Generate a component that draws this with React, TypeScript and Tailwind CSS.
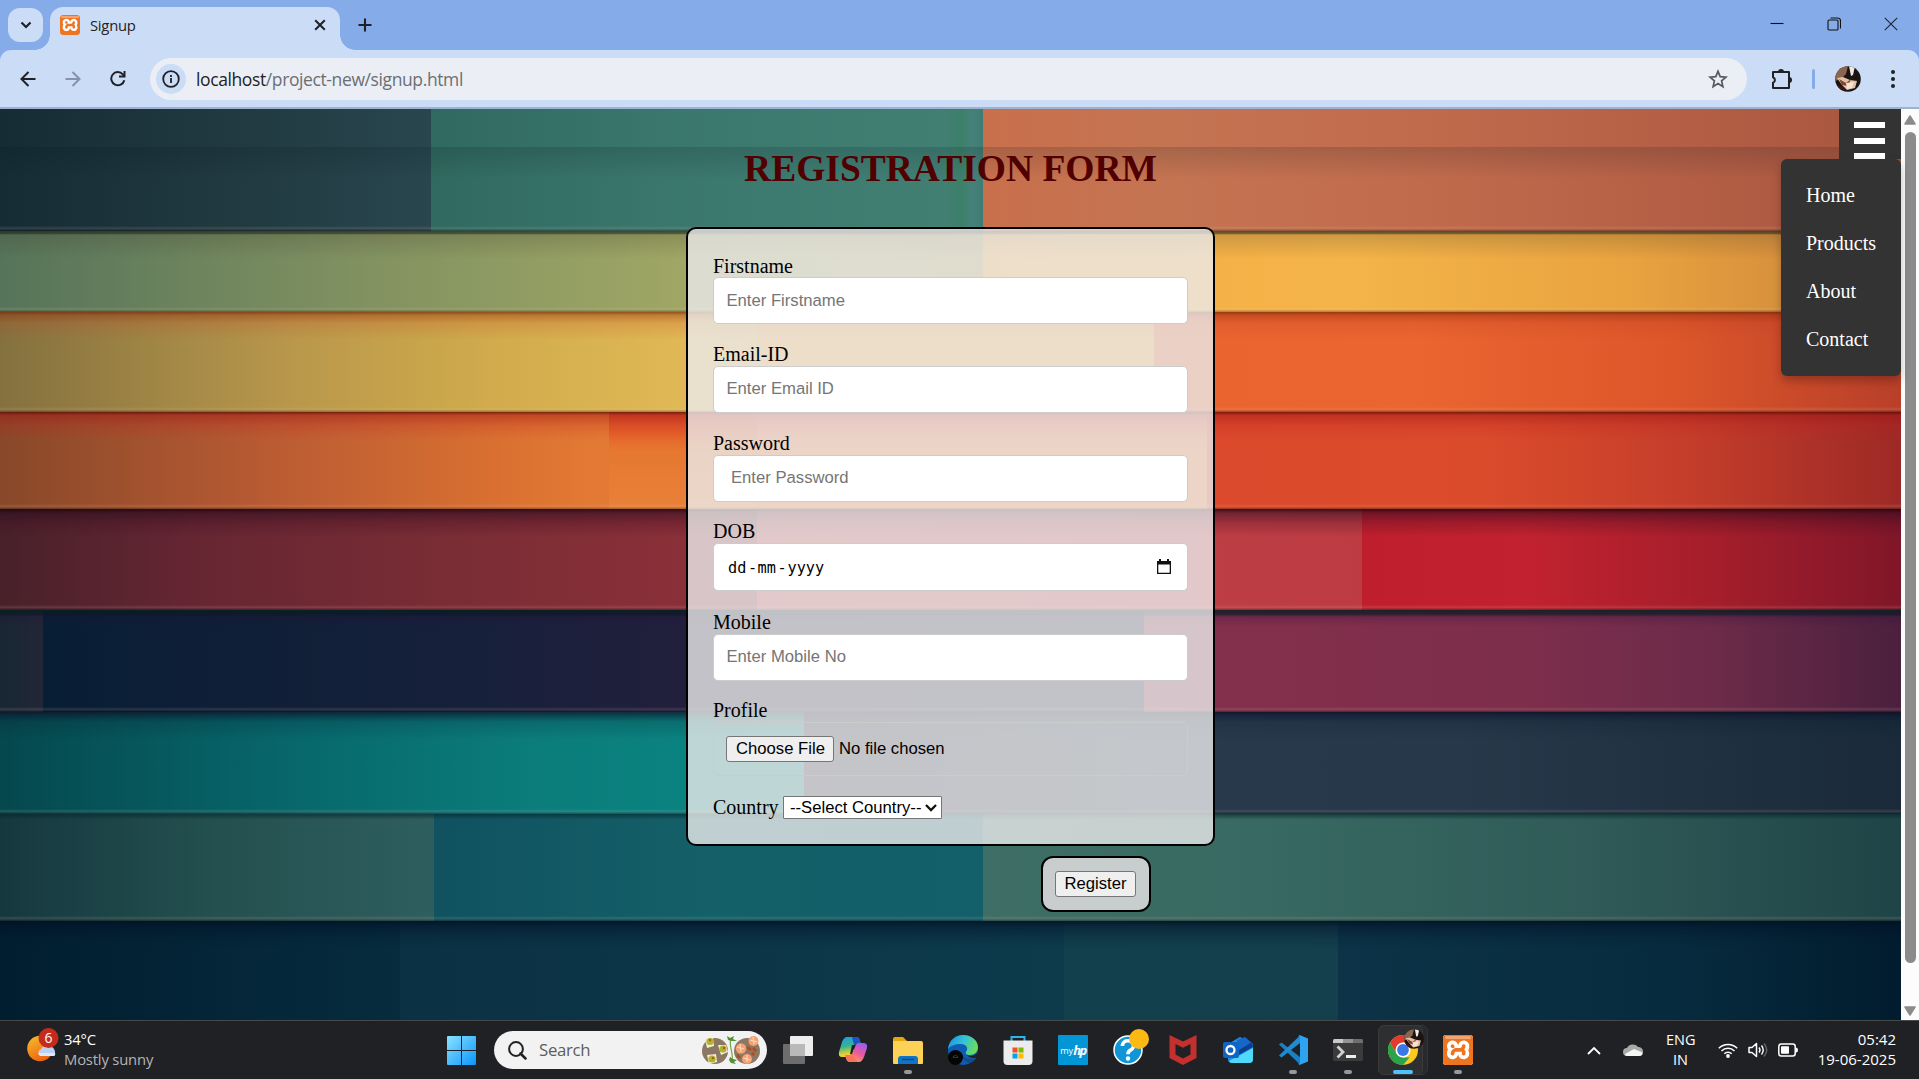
import type { ReactNode } from "react";
import { SiXampp } from "react-icons/si";

type Segment = { size: string; fill: string };
type Row = { height: string; shade: string; segments: Segment[] };

const ROWS: Row[] = [
  {
    height: "h-[122px]",
    shade: "",
    segments: [
      { size: "w-[431px]", fill: "bg-[linear-gradient(90deg,#152c35,#20383f_50%,#29464e)]" },
      { size: "w-[552px]", fill: "bg-[linear-gradient(90deg,#30695f,#3a766c_40%,#417f73_93%,#3c8068_96%,#46807a_98%,#3f7c74)]" },
      { size: "flex-1", fill: "bg-[linear-gradient(90deg,#c96f4c,#c47452_20%,#c06a4c_50%,#a8553f)]" },
    ],
  },
  {
    height: "h-[81px]",
    shade: "bg-[linear-gradient(180deg,rgba(20,30,20,0.7),rgba(20,30,20,0.55)_9%,rgba(60,50,40,0.2)_14%,transparent)]",
    segments: [
      { size: "w-[983px]", fill: "bg-[linear-gradient(90deg,#56745a,#7f9060_35%,#a0a765_70%,#b0a25c)]" },
      { size: "flex-1", fill: "bg-[linear-gradient(90deg,#f5ac44,#f4b449_40%,#e9a33f_70%,#cb833a)]" },
    ],
  },
  {
    height: "h-[100px]",
    shade: "bg-[linear-gradient(180deg,rgba(110,40,0,0.7),rgba(150,40,10,0.4)_12%,rgba(190,60,30,0.18)_40%,transparent)]",
    segments: [
      { size: "w-[757px]", fill: "bg-[linear-gradient(90deg,#84713f,#b8974b_38%,#d1ab4c_65%,#e0b855_90%,#e4b654)]" },
      { size: "w-[397px]", fill: "bg-[#f3a848]" },
      { size: "flex-1", fill: "bg-[linear-gradient(90deg,#ea6430,#ea6530_35%,#dc562a_70%,#b93f29)]" },
    ],
  },
  {
    height: "h-[97px]",
    shade: "bg-[linear-gradient(180deg,rgba(90,10,0,0.75),rgba(160,20,20,0.45)_12%,rgba(190,30,30,0.2)_50%,transparent)]",
    segments: [
      { size: "w-[609px]", fill: "bg-[linear-gradient(90deg,#884829,#ba5b33_45%,#dc7231_85%,#e37a34)]" },
      { size: "w-[148px]", fill: "bg-[linear-gradient(180deg,#dc4f2a,#e56129_22%,#e67830_40%,#e98138)]" },
      { size: "w-[450px]", fill: "bg-[linear-gradient(180deg,#ea5a38,#ef7a38_40%,#f07c34)]" },
      { size: "flex-1", fill: "bg-[linear-gradient(90deg,#dc492c,#da4b2b_40%,#c43d2a_70%,#9d2926)]" },
    ],
  },
  {
    height: "h-[101px]",
    shade: "bg-[linear-gradient(180deg,rgba(25,5,10,0.8),rgba(40,10,30,0.5)_15%,rgba(60,10,30,0.25)_50%,transparent)]",
    segments: [
      { size: "w-[757px]", fill: "bg-[linear-gradient(90deg,#48212a,#652632_25%,#7a2d35_60%,#8f303a)]" },
      { size: "w-[605px]", fill: "bg-[linear-gradient(90deg,#c0434a,#bd3c43)]" },
      { size: "flex-1", fill: "bg-[linear-gradient(90deg,#bf1f2d,#c2222f_30%,#a51e2b_65%,#801629)]" },
    ],
  },
  {
    height: "h-[102px]",
    shade: "bg-[linear-gradient(180deg,rgba(10,30,35,0.85),rgba(10,25,35,0.7)_15%,rgba(40,10,60,0.2)_25%,transparent_60%)]",
    segments: [
      { size: "w-[43px]", fill: "bg-[linear-gradient(90deg,#182732,#222638)]" },
      { size: "w-[1101px]", fill: "bg-[linear-gradient(90deg,#081e34,#17203a_40%,#231f3d_60%,#1f2740)]" },
      { size: "flex-1", fill: "bg-[linear-gradient(90deg,#84304b,#7d2e4b_50%,#6c2b49_75%,#4b203e)]" },
    ],
  },
  {
    height: "h-[102px]",
    shade: "bg-[linear-gradient(180deg,rgba(15,10,30,0.7),rgba(10,20,45,0.5)_15%,rgba(5,30,45,0.2)_35%,transparent)]",
    segments: [
      { size: "w-[804px]", fill: "bg-[linear-gradient(90deg,#05484e,#07666a_35%,#0b7c7a_65%,#0a8784)]" },
      { size: "flex-1", fill: "bg-[linear-gradient(90deg,#2c2c42,#28394a_30%,#27384a_60%,#1a2a3a)]" },
    ],
  },
  {
    height: "h-[107px]",
    shade: "bg-[linear-gradient(180deg,rgba(5,40,45,0.65),rgba(5,40,45,0.35)_10%,transparent_20%)]",
    segments: [
      { size: "w-[434px]", fill: "bg-[linear-gradient(90deg,#15383f,#24504f_50%,#2f5e5f)]" },
      { size: "w-[549px]", fill: "bg-[linear-gradient(90deg,#105260,#146068_50%,#135f6a)]" },
      { size: "flex-1", fill: "bg-[linear-gradient(90deg,#3e6e65,#386962_30%,#305b58_65%,#1f4447)]" },
    ],
  },
  {
    height: "h-[99px]",
    shade: "bg-[linear-gradient(180deg,rgba(2,18,35,0.85),rgba(2,18,40,0.5)_20%,rgba(2,25,45,0.2)_60%,transparent)]",
    segments: [
      { size: "w-[400px]", fill: "bg-[linear-gradient(90deg,#011e30,#062c3e)]" },
      { size: "w-[664px]", fill: "bg-[linear-gradient(90deg,#0b3144,#0d3b4c)]" },
      { size: "w-[274px]", fill: "bg-[linear-gradient(90deg,#12404c,#143f4d)]" },
      { size: "flex-1", fill: "bg-[linear-gradient(90deg,#0c3347,#072b3e_60%,#011c2e)]" },
    ],
  },
];

function StripedBackdrop() {
  return (
    <div className="absolute inset-0 flex flex-col overflow-hidden">
      {ROWS.map((row, i) => (
        <div key={i} className={`relative flex shrink-0 ${row.height}`}>
          {row.segments.map((s, j) => (
            <div key={j} className={`${s.size} ${s.fill}`} />
          ))}
          {i > 0 && <div className={`absolute inset-x-0 top-0 h-7 ${row.shade}`} />}
          {i < ROWS.length - 1 && (
            <div className="absolute inset-x-0 bottom-0 h-[5px] bg-[linear-gradient(180deg,transparent,rgba(255,215,190,0.13)_45%,rgba(20,10,15,0.25)_90%)]" />
          )}
          {i === 0 && (
            <div className="absolute inset-x-0 top-[38px] h-8 bg-[linear-gradient(180deg,rgba(0,20,30,0.16),transparent)]" />
          )}
        </div>
      ))}
    </div>
  );
}

function XamppLogo({ size }: { size: string }) {
  return (
    <span className={`relative flex items-center justify-center overflow-hidden rounded-[3px] bg-white ${size}`}>
      <SiXampp className="size-full scale-[1.02] text-[#ee7420]" />
      <span className="absolute inset-x-[6%] top-[3%] h-[10%] rounded-sm bg-[#f3a571]" />
    </span>
  );
}

function Avatar({ className }: { className: string }) {
  return (
    <svg viewBox="0 0 26 26" className={className}>
      <clipPath id="face">
        <circle cx="13" cy="13" r="12.8" />
      </clipPath>
      <g clipPath="url(#face)">
        <rect width="26" height="26" fill="#1a1312" />
        <path d="M0 0h13l-2 8-5 5-6 2z" fill="#8a6650" />
        <path d="M14 0h6l-2 9-2 1z" fill="#efe9e2" />
        <path d="M2 12l6-1 7 3 7 1-2 7-8 2-5-5z" fill="#e3bfa4" />
        <path d="M4 13l7 4 5-4-3 7-6-1z" fill="#7b4534" />
        <path d="M11 17l8-1-2 6-5 1z" fill="#f4e3d6" />
        <path d="M2 19l7 2 2 5H3z" fill="#3b1614" />
      </g>
    </svg>
  );
}

function Browser() {
  return (
    <header className="flex h-[109px] shrink-0 flex-col bg-[#85ace9] font-['Open_Sans',sans-serif]">
      <div className="flex h-[50px] shrink-0">
        <button className="mt-2 ml-2 flex h-[34px] w-[35px] items-center justify-center rounded-xl bg-[#cbdcf6]">
          <svg viewBox="0 0 12 8" className="h-2 w-3">
            <path d="M1.5 1.5L6 6l4.5-4.5" fill="none" stroke="#1f2124" strokeWidth="2.2" />
          </svg>
        </button>
        <div className="relative mt-[7px] ml-[7px] flex h-[43px] w-[290px] items-center rounded-t-[13px] bg-[#cbdcf6] pb-[7px] pl-[10px]">
          <span className="absolute bottom-0 -left-[15px] size-[15px] bg-[radial-gradient(circle_at_0_0,transparent_14.5px,#cbdcf6_15px)]" />
          <span className="absolute -right-[15px] bottom-0 size-[15px] bg-[radial-gradient(circle_at_100%_0,transparent_14.5px,#cbdcf6_15px)]" />
          <XamppLogo size="size-5" />
          <span className="mt-px ml-[10px] text-[14.8px] tracking-[-0.25px] text-[#1f2124]">Signup</span>
          <svg viewBox="0 0 12 12" className="mr-[14px] ml-auto size-3">
            <path d="M1.2 1.2l9.6 9.6M10.800 1.2L1.200 10.800" stroke="#1f2124" strokeWidth="2" />
          </svg>
        </div>
        <svg viewBox="0 0 14 14" className="mt-[18px] ml-[18px] size-[14px]">
          <path d="M7 .5v13M.5 7h13" stroke="#1f2124" strokeWidth="2.1" />
        </svg>
        <div className="mr-[21px] ml-auto flex items-start gap-[42.500px] pt-[17px]">
          <svg viewBox="0 0 14 14" className="size-[14px]">
            <path d="M0.500 6.500h13" stroke="#111" strokeWidth="1.1" />
          </svg>
          <svg viewBox="0 0 14 14" className="size-[14px]">
            <path d="M1 4a1 1 0 0 1 1-1h8a1 1 0 0 1 1 1v8a1 1 0 0 1-1 1H2a1 1 0 0 1-1-1zM3.500 1h7a3 3 0 0 1 3 3v7.500" fill="none" stroke="#111" strokeWidth="1.100" />
          </svg>
          <svg viewBox="0 0 14 14" className="ml-px size-[14px]">
            <path d="M.8.8l12.400 12.400M13.200.8L.8 13.200" stroke="#1b2430" strokeWidth="1.100" />
          </svg>
        </div>
      </div>
      <div className="flex h-[59px] items-center rounded-t-[11px] border-b-2 border-[#9fb1d0] bg-[#cbdcf6]">
        <svg viewBox="0 0 16 16" className="ml-[19.5px] size-4">
          <path d="M15.500 8H2M8.500 1L1.500 8l7 7" fill="none" stroke="#1f2124" strokeWidth="2" />
        </svg>
        <svg viewBox="0 0 16 16" className="ml-[29px] size-4">
          <path d="M.5 8H14M7.500 1l7 7-7 7" fill="none" stroke="#8592a9" strokeWidth="2" />
        </svg>
        <svg viewBox="0 0 16 16" className="ml-[29px] size-4">
          <path d="M14.300 9.200A6.600 6.600 0 1 1 12.800 3.300L14 4.700" fill="none" stroke="#1f2124" strokeWidth="2" />
          <path d="M15.500 0v6.500H9v-2h4.500V0z" fill="#1f2124" />
        </svg>
        <div className="ml-[24.5px] flex h-[42px] w-[1597px] items-center rounded-full bg-[#ebeff5] pr-[19.5px] pl-[6px]">
          <span className="flex size-[30px] items-center justify-center rounded-full bg-[#cbdcf6]">
            <svg viewBox="0 0 18 18" className="size-[18px]">
              <circle cx="9" cy="9" r="7.800" fill="none" stroke="#1f2124" strokeWidth="1.800" />
              <path d="M9 8v5M9 5v2" stroke="#1f2124" strokeWidth="1.800" />
            </svg>
          </span>
          <span className="mt-[2px] ml-[10px] text-[17.5px] tracking-[-0.39px] text-[#6a6e73]">
            <span className="text-[#1f2124]">localhost</span>/project-new/signup.html
          </span>
          <svg viewBox="0 0 20 20" className="ml-auto size-5">
            <path d="M10 2.300l2.200 5.300 5.800.5-4.400 3.800 1.300 5.700L10 14.600l-4.900 3 1.300-5.700L2 8.100l5.800-.5z" fill="none" stroke="#55585e" strokeWidth="1.700" />
          </svg>
        </div>
        <svg viewBox="0 0 22 22" className="ml-6 size-[22px]">
          <path d="M2 4h16v16H2v-5.200a3 3 0 0 0 0-5.600z" fill="none" stroke="#1f2124" strokeWidth="2" strokeLinejoin="round" />
          <path d="M7 4a3 3 0 0 1 6 0zM18 9a3 3 0 0 1 0 6z" fill="#1f2124" />
        </svg>
        <span className="ml-[19px] h-5 w-[3px] rounded bg-[#85ace9]" />
        <Avatar className="ml-[19.5px] size-[26px]" />
        <svg viewBox="0 0 4 18" className="ml-[30px] h-[18px] w-1">
          <circle cx="2" cy="2" r="2" fill="#1f2124" />
          <circle cx="2" cy="9" r="2" fill="#1f2124" />
          <circle cx="2" cy="16" r="2" fill="#1f2124" />
        </svg>
      </div>
    </header>
  );
}

const FIELD =
  "block h-[46.5px] w-full rounded-[5px] border border-[#ccc] bg-white font-['Liberation_Sans',Arial,sans-serif] text-[16.667px] placeholder:text-[#757575] placeholder:opacity-100";

function Field({ label, height, children }: { label: string; height: string; children: ReactNode }) {
  return (
    <div className={`${height} first:[&_input]:pt-px first:[&>label]:leading-[24px]`}>
      <label className="block h-[23px] leading-[23px]">{label}</label>
      {children}
    </div>
  );
}

function DateField() {
  return (
    <div className="flex h-[48px] w-full items-center rounded-[5px] border border-[#ccc] bg-white pr-4 pl-[14px] font-['DejaVu_Sans_Mono',monospace] text-[15.200px] leading-none">
      <div className="flex pt-[3px]">
        <span className="w-[20px]">dd</span>
        <span className="w-[9.5px]">-</span>
        <span className="w-[20px]">mm</span>
        <span className="w-[10px]">-</span>
        <span>yyyy</span>
      </div>
      <svg viewBox="0 0 14 16" className="ml-auto h-4 w-[14px]">
        <path d="M0 2h2V0h2v2h6V0h2v2h2v13H0zM1.300 5.500v8.200h11.400V5.500z" fill="#111" fillRule="evenodd" />
      </svg>
    </div>
  );
}

function SignupForm() {
  return (
    <form className="h-[619px] w-[529px] rounded-[10px] border-2 border-black bg-[rgba(235,235,235,0.8)] p-[25px] text-xl">
      <Field label="Firstname" height="h-[89px]">
        <input className={`${FIELD} px-[12.5px]`} placeholder="Enter Firstname" />
      </Field>
      <Field label="Email-ID" height="h-[89px]">
        <input className={`${FIELD} px-[12.5px]`} placeholder="Enter Email ID" />
      </Field>
      <Field label="Password" height="h-[88px]">
        <input className={`${FIELD} px-[17px]`} placeholder="Enter Password" />
      </Field>
      <Field label="DOB" height="h-[91px]">
        <DateField />
      </Field>
      <Field label="Mobile" height="h-[88px]">
        <input className={`${FIELD} px-[12.5px]`} placeholder="Enter Mobile No" />
      </Field>
      <Field label="Profile" height="h-[96px]">
        <div className="flex h-[54px] items-center gap-[5px] rounded-[5px] border border-[#ccc] pl-[12px] font-['Liberation_Sans',Arial,sans-serif] text-[16.667px]">
          <button type="button" className="h-[26px] w-[108px] rounded-[3px] border border-[#767676] bg-[#efefef] pl-px leading-none">
            Choose File
          </button>
          <span>No file chosen</span>
        </div>
      </Field>
      <div className="flex h-[25px] items-center">
        <label className="w-[70px] leading-[23px]">Country</label>
        <div className="flex h-[23px] w-[159px] items-center justify-between rounded-[1px] border border-[#767676] bg-white pr-[4px] pl-[6px] font-['Liberation_Sans',Arial,sans-serif] text-[16.667px] leading-none">
          <span className="pt-px whitespace-nowrap">--Select Country--</span>
          <svg viewBox="0 0 12 8" className="h-2 w-3">
            <path d="M1 1l5 5 5-5" fill="none" stroke="#111" strokeWidth="2.300" />
          </svg>
        </div>
      </div>
    </form>
  );
}

function Page() {
  return (
    <div className="flex h-[911px] shrink-0">
      <main className="relative flex w-[1901px] flex-col items-center font-['Liberation_Serif','Times_New_Roman',serif]">
        <StripedBackdrop />
        <h1 className="relative mt-[36px] h-[46px] text-[37.5px] leading-[47px] font-bold text-[#500000]">REGISTRATION FORM</h1>
        <div className="relative mt-[36px]">
          <SignupForm />
        </div>
        <div className="relative mt-[10px] ml-[290px] flex h-14 w-[110px] items-center justify-center rounded-[12px] border-2 border-black bg-[rgba(216,216,216,0.9)]">
          <button className="h-[26px] w-[81px] rounded-[3px] border border-[#767676] bg-[#efefef] font-['Liberation_Sans',Arial,sans-serif] text-[16.667px] leading-none">
            Register
          </button>
        </div>
        <nav className="absolute top-0 right-0 flex flex-col items-end">
          <div className="flex h-[50px] w-[62px] flex-col gap-[9.5px] bg-[#333] pt-[13px] pl-[15px]">
            <span className="h-[6px] w-[31px] shrink-0 bg-white" />
            <span className="h-[6px] w-[31px] shrink-0 bg-white" />
            <span className="h-[6px] w-[31px] shrink-0 bg-white" />
          </div>
          <ul className="h-[217px] w-[120px] rounded-[6px] bg-[#333] pt-[12px] pl-[25px] text-xl text-white shadow-[0_5px_10px_rgba(0,0,0,0.25)]">
            {["Home", "Products", "About", "Contact"].map((item) => (
              <li key={item} className="flex h-12 items-center">
                {item}
              </li>
            ))}
          </ul>
        </nav>
      </main>
      <div className="flex w-[18px] flex-col items-center bg-[#fcfcfc] pt-[6px] pb-[4px]">
        <svg viewBox="0 0 12 10" className="h-[10px] w-3">
          <path d="M6 1l5 8H1z" fill="#8b8b8b" stroke="#8b8b8b" strokeLinejoin="round" strokeWidth="1.500" />
        </svg>
        <span className="mt-[7px] h-[831px] w-[11px] rounded-full bg-[#8b8b8b]" />
        <svg viewBox="0 0 12 10" className="mt-auto h-[10px] w-3">
          <path d="M6 9l5-8H1z" fill="#8b8b8b" stroke="#8b8b8b" strokeLinejoin="round" strokeWidth="1.500" />
        </svg>
      </div>
    </div>
  );
}

function WeatherIcon() {
  return (
    <svg viewBox="0 0 34 42" className="mb-[2px] h-[42px] w-[34px]">
      <defs>
        <linearGradient id="sun" x1="0" y1="0" x2="0.500" y2="1">
          <stop offset="0" stopColor="#f5c130" />
          <stop offset="1" stopColor="#ee6410" />
        </linearGradient>
      </defs>
      <circle cx="13" cy="20.500" r="12.800" fill="url(#sun)" />
      <path d="M13 28a4 4 0 0 1 1-7 6 6 0 0 1 9-2 5 5 0 0 1 3 9z" fill="#bcd0f4" />
      <path d="M11 25h17a2 2 0 0 1-2 3H13z" fill="#dbe7fb" />
      <circle cx="21.500" cy="10" r="10" fill="#c42b1c" />
      <text x="21.500" y="15" textAnchor="middle" fontSize="14" fill="#fff" fontFamily="Open Sans, sans-serif">6</text>
    </svg>
  );
}

function StartIcon() {
  return (
    <svg viewBox="0 0 29 29" className="size-[29px]">
      <defs>
        <linearGradient id="win" x1="0" y1="0" x2="1" y2="1" gradientUnits="objectBoundingBox">
          <stop offset="0" stopColor="#8be3ff" />
          <stop offset="1" stopColor="#0a94fb" />
        </linearGradient>
      </defs>
      <path d="M1 0h13v14H0V1a1 1 0 0 1 1-1zM15 0h13a1 1 0 0 1 1 1v13H15zM0 15h14v14H1a1 1 0 0 1-1-1zM15 15h14v13a1 1 0 0 1-1 1H15z" fill="url(#win)" />
    </svg>
  );
}

function FoodArt() {
  return (
    <svg viewBox="0 0 58 32" className="h-8 w-[58px]">
      <circle cx="13" cy="17" r="13" fill="#8b7762" />
      <circle cx="45" cy="17" r="13" fill="#8b7762" />
      <g fill="#f4ecd4">
        <path d="M3 5l8-1 1 8-7 2z" />
        <path d="M16 11l8 0 2 7-7 3z" />
        <path d="M5 21l9-1 1 8-8 2z" />
      </g>
      <g fill="#a9b82b">
        <circle cx="8" cy="7.500" r="3.600" />
        <circle cx="21" cy="15" r="3.600" />
        <circle cx="10" cy="25" r="3.600" />
      </g>
      <g fill="#d9402a">
        <circle cx="8" cy="6" r="1.200" />
        <circle cx="22" cy="14" r="1.200" />
        <circle cx="11" cy="24" r="1.200" />
      </g>
      <path d="M29 4c-3 8 3 14 1 24" fill="none" stroke="#79a544" strokeWidth="1.200" />
      <path d="M25 2l3 2 4-2-1 3 4 2-5 0-4-1zM28 23l3 2 4 1-3 2 2 2-5-1-2-3z" fill="#4f9136" />
      <g fill="#f5a273">
        <circle cx="39" cy="14.500" r="5.200" />
        <circle cx="51.500" cy="7" r="5" />
        <circle cx="45" cy="25" r="5" />
      </g>
      <g fill="none" stroke="#fcd8ba" strokeWidth="1.100">
        <path d="M35 13l7 2M38 10l1 8M48 6l7 2M51 3l1 7M41.500 24l7 2M45 21l0 7" />
      </g>
      <path d="M45 13l4 3M51 14l3 3M35 21l3 3M50 19l2 2" stroke="#b8461f" strokeWidth="2.600" />
    </svg>
  );
}

const ICON = "size-[30px] overflow-visible";

const TaskView = () => (
  <svg viewBox="0 0 30 30" className={ICON}>
    <rect x="7" y="1" width="23" height="20" rx="1" fill="#ededed" />
    <rect x="0" y="9" width="22" height="20" rx="1" fill="#6d6d6d" />
    <path d="M7 9h15v12H7z" fill="#b9b9b9" />
  </svg>
);

const Copilot = () => (
  <svg viewBox="0 0 30 30" className={ICON}>
    <defs>
      <linearGradient id="cpA" x1="0" y1="0" x2="0.200" y2="1">
        <stop offset="0" stopColor="#1f9af0" />
        <stop offset="0.500" stopColor="#36b58e" />
        <stop offset="0.900" stopColor="#f0d030" />
      </linearGradient>
      <linearGradient id="cpB" x1="0.800" y1="0" x2="0.200" y2="1">
        <stop offset="0" stopColor="#9a5cf0" />
        <stop offset="0.500" stopColor="#ee5a9a" />
        <stop offset="1" stopColor="#fbb257" />
      </linearGradient>
    </defs>
    <path d="M9 2h10q2 0 3 4l1 3h-5q-2 0-3 3l-2 7q-1 3-4 3H4q-4 0-3-5l3-10q2-5 5-5z" fill="url(#cpA)" />
    <path d="M14 2h5q2 0 3 4l1 3h-5q-1 0-2 1z" fill="#1b54c8" />
    <path d="M21 27H12q-3 0-4-4l-1-3h5q2 0 3-3l2-5q1-4 4-4h4q5 0 4 5l-3 9q-2 5-5 5z" fill="url(#cpB)" />
    <path d="M7 20h6l3-7v7q0 3 4 7h-8q-3 0-4-4z" fill="#f9735b" />
    <path d="M14 10h3l-3 9h-2z" fill="#202124" />
  </svg>
);

const Folder = () => (
  <svg viewBox="0 0 30 30" className={ICON}>
    <path d="M0 4q0-2 2-2h8l4 4v8H0z" fill="#e5a50f" />
    <path d="M0 6h28q2 0 2 2v20q0 1-1 1H1q-1 0-1-1z" fill="#fdd155" />
    <path d="M5 24q0-3 3-3h14q3 0 3 3v5H5z" fill="#1173c6" />
    <path d="M9 24.500h12" stroke="#0a4c91" strokeWidth="1.500" />
  </svg>
);

const Edge = () => (
  <svg viewBox="0 0 30 30" className={ICON}>
    <defs>
      <linearGradient id="edT" x1="0" y1="0.300" x2="1" y2="0.600">
        <stop offset="0" stopColor="#1b9ade" />
        <stop offset="0.500" stopColor="#35c3d5" />
        <stop offset="1" stopColor="#6fe04d" />
      </linearGradient>
    </defs>
    <circle cx="15" cy="15" r="15" fill="#0f5cb5" />
    <path d="M0 14C1 5 8 0 15 0c9 0 15 6 15 12 0 5-4 8-8 8-3 0-5-1-4-3 3-4 0-8-5-8C7 9 2 11 0 14z" fill="url(#edT)" />
    <path d="M17 12c-5 3-4 12 5 12 3 0 5-1 7-2-2 3-4 5-7 6-7-1-12-9-5-16z" fill="#124b8a" />
    <path d="M19 20c3 2 8 1 11-3 0 2 0 3-1 5-3 2-8 1-10-2z" fill="#202124" />
    <circle cx="7.500" cy="22.500" r="7.500" fill="#050505" />
    <path d="M5 22.500a2.500 2 0 0 1 5 0z" fill="none" stroke="#333" />
  </svg>
);

const Store = () => (
  <svg viewBox="0 0 30 30" className={ICON}>
    <path d="M8.500 7V2h13v5" fill="none" stroke="#2cb4ee" strokeWidth="2" />
    <path d="M0.500 5.500h29V26q0 4-4 4h-21q-4 0-4-4z" fill="#ececec" />
    <path d="M9.500 12.500h5v5h-5z" fill="#f25022" />
    <path d="M15.500 12.500h5v5h-5z" fill="#7fba00" />
    <path d="M9.500 18.500h5v5h-5z" fill="#00a4ef" />
    <path d="M15.500 18.500h5v5h-5z" fill="#ffb900" />
  </svg>
);

const MyHp = () => (
  <span className="flex size-[30px] items-center justify-center rounded-[1px] bg-[#0396d6] font-['Open_Sans',sans-serif] leading-none text-white">
    <span className="text-[9px]">my</span>
    <span className="text-[13px] font-bold tracking-[-1.500px] italic">hp</span>
  </span>
);

const Help = () => (
  <svg viewBox="0 0 30 30" className={ICON}>
    <circle cx="15" cy="15" r="14" fill="#0f95d8" stroke="#fff" strokeWidth="1.500" />
    <path d="M9.500 11a5.500 5 0 1 1 8 4.200c-2 1-2.500 1.800-2.500 4" fill="none" stroke="#fff" strokeWidth="3.600" />
    <circle cx="15" cy="23.500" r="2.200" fill="#fff" />
    <circle cx="26" cy="4" r="10" fill="#fdb913" />
  </svg>
);

const McAfee = () => (
  <svg viewBox="0 0 30 30" className={ICON}>
    <path d="M1.500 0L15 6.500 28.500 0v23L15 30 1.500 23zM7.500 9v10.500L15 23.500l7.500-4V9L15 12.800z" fill="#c3302e" fillRule="evenodd" />
  </svg>
);

const Outlook = () => (
  <svg viewBox="0 0 30 30" className={ICON}>
    <path d="M5 9L17 2l13 7v15q0 4-4 4H9q-4 0-4-4z" fill="#1f8fe8" />
    <path d="M14 5l8-3 8 7-14 9z" fill="#1667c8" />
    <path d="M30 13v11q0 4-4 4H9q-2 0-3-2z" fill="#4fd8f7" />
    <path d="M16 15l13-8 1 5-14 8z" fill="#0c3f91" />
    <rect x="0" y="7" width="16" height="16" rx="2" fill="#0f64c4" />
    <circle cx="7.500" cy="15" r="4" fill="none" stroke="#fff" strokeWidth="2.300" />
  </svg>
);

const VsCode = () => (
  <svg viewBox="0 0 30 30" className={ICON}>
    <path d="M1 9.500l2.500-2L22 22v7.500z" fill="#1b7fc4" />
    <path d="M1 20.500l2.500 2L22 8V0.500z" fill="#1e8bd2" />
    <path d="M21.500 0L30 3.500v23L21.500 30 20 28.500h2V1.500h-2z" fill="#2ea3ef" />
  </svg>
);

const Terminal = () => (
  <svg viewBox="0 0 30 30" className={ICON}>
    <rect y="4" width="30" height="22" rx="1.500" fill="#3b3b3b" />
    <path d="M0 8V5.500Q0 4 1.500 4H10v4z" fill="#c9c9c9" />
    <path d="M10 4h10v4H10z" fill="#949494" />
    <path d="M20 4h8.500Q30 4 30 5.500V8H20z" fill="#6f6f6f" />
    <path d="M4.500 11.500l5.500 5.500-5.500 5.500" fill="none" stroke="#d2d2d2" strokeWidth="2.800" />
    <path d="M13 21.500h10" stroke="#eee" strokeWidth="3" />
  </svg>
);

const Chrome = () => (
  <span className="relative flex h-[50px] w-[50px] items-center justify-center">
    <span className="absolute inset-y-0 left-0 w-[50px] rounded-md border border-[#353537] bg-[#28292b]" />
    <span className="absolute inset-y-0 left-0 w-[45px] rounded-md border border-[#3a3a3c] bg-[#2e2f31]" />
    <svg viewBox="0 0 30 30" className="relative size-[30px]">
      <circle cx="15" cy="15" r="15" fill="#fcc91f" />
      <path d="M2 7.500A15 15 0 0 1 28 7.500H15L8.500 18.700z" fill="#e33b2e" />
      <path d="M2 7.500L8.500 18.700 15 22.500h6.500L15 30A15 15 0 0 1 2 7.500z" fill="#2ba24c" />
      <circle cx="15" cy="15" r="7.500" fill="#fff" />
      <circle cx="15" cy="15" r="5.900" fill="#3b78e7" />
    </svg>
    <Avatar className="absolute top-[4px] right-[4px] size-5" />
  </span>
);

type App = { name: string; icon: ReactNode; mark?: "idle" | "active" };

const APPS: App[] = [
  { name: "Task View", icon: <TaskView /> },
  { name: "Copilot", icon: <Copilot /> },
  { name: "Explorer", icon: <Folder />, mark: "idle" },
  { name: "Edge", icon: <Edge /> },
  { name: "Store", icon: <Store /> },
  { name: "myHP", icon: <MyHp /> },
  { name: "Help", icon: <Help /> },
  { name: "McAfee", icon: <McAfee /> },
  { name: "Outlook", icon: <Outlook /> },
  { name: "Code", icon: <VsCode />, mark: "idle" },
  { name: "Terminal", icon: <Terminal />, mark: "idle" },
  { name: "Chrome", icon: <Chrome />, mark: "active" },
  { name: "XAMPP", icon: <XamppLogo size="size-[30px]" />, mark: "idle" },
];

function Taskbar() {
  return (
    <footer className="flex h-[59px] shrink-0 items-center border-t border-[#47484a] bg-[#202124] font-['Open_Sans',sans-serif] text-[14.800px] text-white">
      <div className="flex w-[434px] items-center pl-[27px]">
        <WeatherIcon />
        <div className="mb-[2px] ml-[3px] leading-5 tracking-[-0.17px]">
          <div>34°C</div>
          <div className="text-[#b4b5b6]">Mostly sunny</div>
        </div>
      </div>
      <div className="flex w-[55px] justify-center">
        <StartIcon />
      </div>
      <div className="ml-[5px] flex h-[38px] w-[273px] items-center rounded-full bg-[#f2f2f2] pr-[7px] pl-[14px]">
        <svg viewBox="0 0 19 19" className="size-[19px]">
          <circle cx="8" cy="8" r="6.900" fill="none" stroke="#222" strokeWidth="2" />
          <path d="M12.500 12.500l5 5" stroke="#222" strokeWidth="2.500" strokeLinecap="round" />
        </svg>
        <span className="ml-[12px] text-[16.800px] tracking-[-0.3px] text-[#5d5d5d]">Search</span>
        <span className="ml-auto">
          <FoodArt />
        </span>
      </div>
      <div className="ml-[3.500px] flex h-full">
        {APPS.map((app) => (
          <div key={app.name} className="relative flex w-[55px] items-center justify-center">
            {app.icon}
            {app.mark === "idle" && <span className="absolute bottom-[5px] h-1 w-2 rounded-full bg-[#97989b]" />}
            {app.mark === "active" && <span className="absolute bottom-[5px] h-1 w-5 rounded-full bg-[#4cc2ff]" />}
          </div>
        ))}
      </div>
      <div className="mr-[23px] ml-auto flex items-center">
        <svg viewBox="0 0 14 9" className="h-[9px] w-[14px]">
          <path d="M1 8l6-6 6 6" fill="none" stroke="#fff" strokeWidth="1.800" />
        </svg>
        <svg viewBox="0 0 20 14" className="ml-[22px] h-[14px] w-5">
          <path d="M4 13a4 4 0 0 1 0-8 6.500 6.500 0 0 1 11-1 4.500 4.500 0 0 1 1 9z" fill="#a9a9a9" />
          <path d="M2 11l9-5 8.500 3.500Q20 13 16 13H4q-2 0-2-2z" fill="#f5f5f5" />
        </svg>
        <div className="ml-[23px] w-[29px] text-center text-[14.500px] leading-5">
          <div>ENG</div>
          <div>IN</div>
        </div>
        <svg viewBox="0 0 20 16" className="ml-[23px] h-4 w-5">
          <g fill="none" stroke="#fff" strokeWidth="1.500">
            <path d="M.8 6.300a13 13 0 0 1 18.400 0M3.500 9a9.200 9.200 0 0 1 13 0M6.300 11.700a5.300 5.300 0 0 1 7.400 0" />
          </g>
          <circle cx="10" cy="14" r="1.900" fill="#fff" />
        </svg>
        <svg viewBox="0 0 20 16" className="ml-[10px] h-4 w-5">
          <path d="M1 5.500h3L8.500 1.500v13L4 10.500H1z" fill="none" stroke="#fff" strokeWidth="1.500" strokeLinejoin="round" />
          <path d="M11 5.500q2 2.500 0 5M13.500 3.500q3.500 4.500 0 9" fill="none" stroke="#fff" strokeWidth="1.400" />
          <path d="M16 1.500q5.500 6.500 0 13" fill="none" stroke="#66676a" strokeWidth="1.400" />
        </svg>
        <svg viewBox="0 0 20 14" className="ml-[10px] h-[14px] w-5">
          <rect x=".8" y="1" width="16.400" height="12" rx="2.500" fill="none" stroke="#fff" strokeWidth="1.500" />
          <rect x="3" y="3.200" width="8" height="7.600" rx="0.800" fill="#fff" />
          <path d="M18 4.500q2 0 2 2.500t-2 2.500z" fill="#fff" />
        </svg>
        <div className="mb-[2px] ml-[19px] w-[79px] text-right text-[15px] leading-5 whitespace-nowrap">
          <div>05:42</div>
          <div>19-06-2025</div>
        </div>
      </div>
    </footer>
  );
}

export default function App() {
  return (
    <div className="flex h-[1079px] w-[1919px] flex-col overflow-hidden">
      <Browser />
      <Page />
      <Taskbar />
    </div>
  );
}
